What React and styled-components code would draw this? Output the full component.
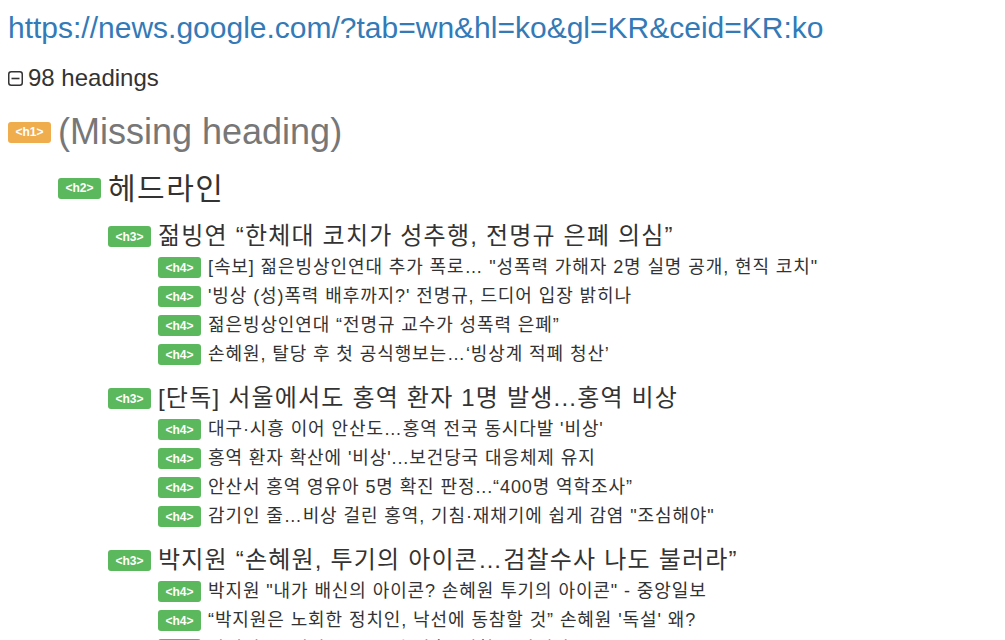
import styled, { createGlobalStyle } from 'styled-components';

const GlobalStyle = createGlobalStyle`
  body {
    margin: 0;
    background: #fff;
    font-family: "Liberation Sans", Arial, "Noto Sans CJK KR", sans-serif;
    color: #333;
  }
`;

const Page = styled.div`
  padding: 11px 8px 0;
  height: 629px;
  overflow: hidden;
`;

const UrlLink = styled.a`
  display: block;
  font-size: 30px;
  line-height: 33px;
  color: #337ab7;
  text-decoration: none;
`;

const Summary = styled.div`
  display: flex;
  align-items: center;
  gap: 5px;
  margin-top: 21px;
  font-size: 24px;
  line-height: 26px;
  color: #333;
`;

const Toggle = styled.svg`
  width: 15px;
  height: 15px;
  flex-shrink: 0;
  margin-top: 1px;
`;

const Outline = styled.div`
  display: flex;
  flex-direction: column;
`;

const sizes = {
  1: { font: 36, height: 40, gap: 21 },
  2: { font: 30, height: 38, gap: 17 },
  3: { font: 24, height: 33, gap: 13 },
  4: { font: 18, height: 29, gap: 0 },
};

const Row = styled.div`
  display: flex;
  align-items: center;
  gap: 7px;
  padding-left: ${(p) => (p.$level - 1) * 50}px;
  height: ${(p) => sizes[p.$level].height}px;
  margin-top: ${(p) => sizes[p.$level].gap}px;
  white-space: nowrap;
`;

const Badge = styled.span`
  display: inline-flex;
  align-items: center;
  justify-content: center;
  width: 43px;
  height: 21px;
  flex-shrink: 0;
  border-radius: 3px;
  background: ${(p) => (p.$warn ? '#f0ad4e' : '#5cb85c')};
  color: #fff;
  font-family: "Liberation Sans", Arial, sans-serif;
  font-size: 12px;
  font-weight: bold;
  line-height: 1;
`;

const Title = styled.span`
  font-size: ${(p) => sizes[p.$level].font}px;
  line-height: 1.1;
  letter-spacing: ${(p) => (p.$missing ? 0 : '0.05em')};
  color: ${(p) => (p.$missing ? '#777' : '#333')};
`;

const headings = [
  { level: 1, text: '(Missing heading)', missing: true },
  { level: 2, text: '헤드라인' },
  { level: 3, text: '젊빙연 “한체대 코치가 성추행, 전명규 은폐 의심”' },
  { level: 4, text: '[속보] 젊은빙상인연대 추가 폭로… "성폭력 가해자 2명 실명 공개, 현직 코치"' },
  { level: 4, text: "'빙상 (성)폭력 배후까지?' 전명규, 드디어 입장 밝히나" },
  { level: 4, text: '젊은빙상인연대 “전명규 교수가 성폭력 은폐”' },
  { level: 4, text: '손혜원, 탈당 후 첫 공식행보는…‘빙상계 적폐 청산’' },
  { level: 3, text: '[단독] 서울에서도 홍역 환자 1명 발생...홍역 비상' },
  { level: 4, text: "대구·시흥 이어 안산도…홍역 전국 동시다발 '비상'" },
  { level: 4, text: "홍역 환자 확산에 '비상'...보건당국 대응체제 유지" },
  { level: 4, text: '안산서 홍역 영유아 5명 확진 판정...“400명 역학조사”' },
  { level: 4, text: '감기인 줄…비상 걸린 홍역, 기침·재채기에 쉽게 감염 "조심해야"' },
  { level: 3, text: '박지원 “손혜원, 투기의 아이콘…검찰수사 나도 불러라”' },
  { level: 4, text: '박지원 "내가 배신의 아이콘? 손혜원 투기의 아이콘" - 중앙일보' },
  { level: 4, text: "“박지원은 노회한 정치인, 낙선에 동참할 것” 손혜원 '독설' 왜?" },
  { level: 4, text: '박지원 “손혜원 목포 투기 의혹, 검찰 수사해야”' },
];

const App = () => {
  return (
    <>
      <GlobalStyle />
      <Page>
        <UrlLink href="#">https://news.google.com/?tab=wn&amp;hl=ko&amp;gl=KR&amp;ceid=KR:ko</UrlLink>
        <Summary>
          <Toggle viewBox="0 0 15 15">
            <rect x="0.75" y="0.75" width="13.5" height="13.5" rx="2.5" fill="none" stroke="#333" strokeWidth="1.5" />
            <line x1="3.5" y1="7.5" x2="11.5" y2="7.5" stroke="#333" strokeWidth="1.6" />
          </Toggle>
          98 headings
        </Summary>
        <Outline>
          {headings.map((h, i) => (
            <Row key={i} $level={h.level}>
              <Badge $warn={h.level === 1}>{`<h${h.level}>`}</Badge>
              <Title $level={h.level} $missing={h.missing}>{h.text}</Title>
            </Row>
          ))}
        </Outline>
      </Page>
    </>
  );
};

export default App;
